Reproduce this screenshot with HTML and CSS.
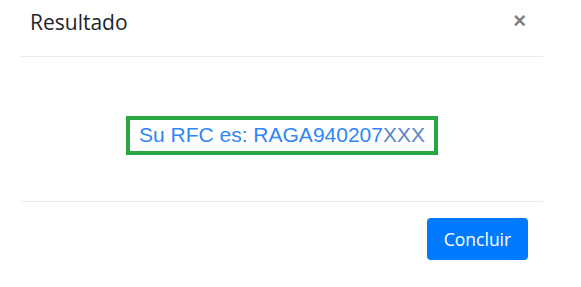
FILE: index.html
```html
<!DOCTYPE html>
<html>

<head>
    <title>Resultado</title>
    <meta name="viewport" content="width=device-width, initial-scale=1.0">

    <link rel="stylesheet" href="styles.css">
</head>

<body>
    <div class="modal-content">
        <div class="modal-header">
            <h5 class="modal-title">Resultado</h5>
            <button type="button" class="close">&times;</button>
        </div>

        <div class="modal-body">
            <div class="rfc-box">
                <span class="rfc-text">Su RFC es: RAGA940207</span><span class="rfc-tail">XXX</span>
            </div>
        </div>

        <div class="modal-footer">
            <button type="button" class="btn-primary">Concluir</button>
        </div>
    </div>
</body>
</html>
```

FILE: styles.css
```css
* {
    box-sizing: border-box;
}

body {
    margin: 0;
    background-color: #ffffff;
    font-family: "Open Sans", sans-serif;
}

.modal-content {
    margin-left: 21px;
    width: 522px;
}

.modal-header {
    display: flex;
    justify-content: space-between;
    align-items: flex-start;
    height: 57px;
    padding: 7px 17px 0 9px;
    border-bottom: 1px solid #e9ecef;
}

.modal-title {
    margin: 0;
    font-size: 21px;
    font-weight: 400;
    line-height: 1.5;
    color: #212529;
}

.close {
    margin-top: 3px;
    padding: 0;
    border: none;
    background: none;
    font-family: "Liberation Sans", sans-serif;
    font-size: 22px;
    font-weight: 700;
    line-height: 1;
    color: #000000;
    opacity: 0.5;
    cursor: pointer;
}

.modal-body {
    padding: 59px 0 46px;
    text-align: center;
}

.rfc-box {
    display: inline-block;
    border: 4px solid #28a745;
    padding: 3px 9px 4px;
    font-family: "Liberation Sans", Arial, sans-serif;
    font-size: 21px;
    line-height: 24px;
}

.rfc-text {
    color: #2f86f6;
}

.rfc-tail {
    color: #5b86c6;
}

.modal-footer {
    display: flex;
    justify-content: flex-end;
    padding: 16px 15px 0 0;
    border-top: 1px solid #e9ecef;
}

.btn-primary {
    width: 101px;
    height: 42px;
    background-color: #007bff;
    color: #ffffff;
    border: none;
    border-radius: 4px;
    font-family: "Open Sans", sans-serif;
    font-size: 17.5px;
    cursor: pointer;
}
```
